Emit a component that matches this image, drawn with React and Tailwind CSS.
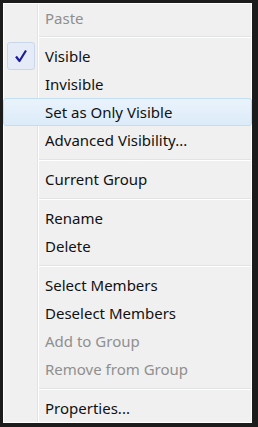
import React from 'react';

const items = [
  { label: 'Paste', disabled: true },
  { sep: true },
  { label: 'Visible', checked: true },
  { label: 'Invisible' },
  { label: 'Set as Only Visible', hover: true },
  { label: 'Advanced Visibility...' },
  { sep: true },
  { label: 'Current Group' },
  { sep: true },
  { label: 'Rename' },
  { label: 'Delete' },
  { sep: true },
  { label: 'Select Members' },
  { label: 'Deselect Members' },
  { label: 'Add to Group', disabled: true },
  { label: 'Remove from Group', disabled: true },
  { sep: true },
  { label: 'Properties...' },
];

function Check() {
  return (
    <svg width="16" height="16" viewBox="0 0 16 16">
      <path d="M3 8.5 L6.5 13 L13 2.5" fill="none" stroke="#1d1d99" strokeWidth="2.2" strokeLinejoin="round" />
    </svg>
  );
}

export default function App() {
  return (
    <div className="w-[258px] h-[427px] bg-[#1c1c1c] pl-[3px] pt-[3px] pr-[6px] pb-[4px]">
      <div className="h-full border border-white bg-[#f0f0f0] bg-[linear-gradient(to_right,#f0f0f0_33px,#e2e3e3_33px,#e2e3e3_34px,#ffffff_34px,#ffffff_35px,#f0f0f0_35px)] font-['Noto_Sans',sans-serif] text-[15px]">
        {items.map((it, i) =>
          it.sep ? (
            <div key={i} className={`${i === 1 ? 'h-[10px]' : 'h-[11px]'} flex flex-col justify-center pl-[35px]`}>
              <div className="h-px bg-[#e2e3e3]" />
              <div className="h-px bg-white" />
            </div>
          ) : (
            <div
              key={i}
              className={`h-[28px] flex items-center ${
                it.hover
                  ? 'mx-[-1px] rounded-[3px] border border-[#c2def4] bg-[linear-gradient(to_bottom,#eaf3fc,#dcebf9)]'
                  : ''
              }`}
            >
              <div className="w-[33px] h-full flex items-center justify-center">
                {it.checked && (
                  <div className="w-[28px] h-[28px] rounded-[3px] border border-[#cad6ea] bg-[#e5ecf7] flex items-center justify-center">
                    <Check />
                  </div>
                )}
              </div>
              <span className={`pl-[8px] leading-none ${it.disabled ? 'text-[#8f8f8f]' : 'text-[#111]'}`}>
                {it.label}
              </span>
            </div>
          )
        )}
      </div>
    </div>
  );
}
